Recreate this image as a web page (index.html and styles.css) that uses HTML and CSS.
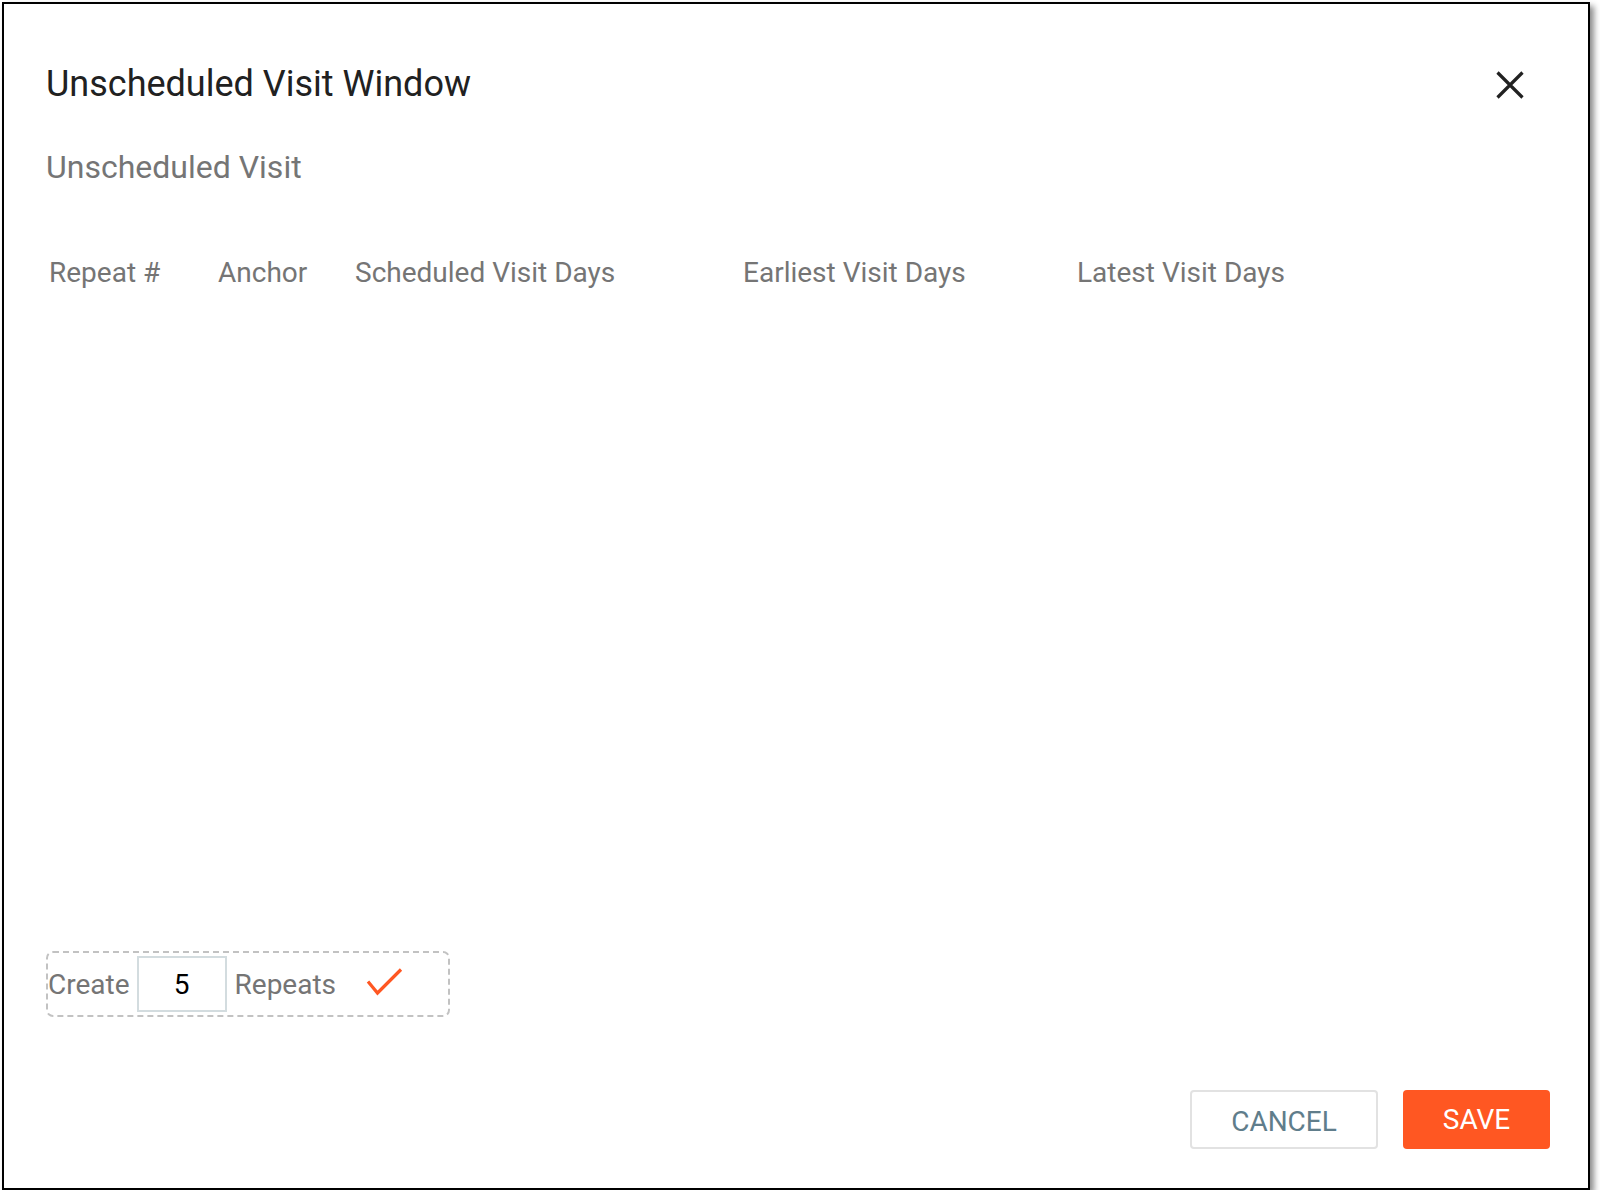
FILE: index.html
```html
<!DOCTYPE html>
<html lang="en">
<head>
<meta charset="utf-8">
<title>Unscheduled Visit Window</title>
<link rel="stylesheet" href="styles.css">
</head>
<body>
<div class="dialog">
  <div class="dialog-head">
    <h1 class="title">Unscheduled Visit Window</h1>
    <button class="close" aria-label="Close">
      <svg width="28" height="28" viewBox="0 0 28 28"><path d="M1.5 1.5 L26.5 26.5 M26.5 1.5 L1.5 26.5" stroke="#212121" stroke-width="3.2" fill="none"/></svg>
    </button>
  </div>
  <h2 class="subtitle">Unscheduled Visit</h2>
  <div class="cols">
    <span>Repeat #</span>
    <span>Anchor</span>
    <span>Scheduled Visit Days</span>
    <span>Earliest Visit Days</span>
    <span>Latest Visit Days</span>
  </div>
  <div class="spacer"></div>
  <div class="create">
    <span class="lbl">Create</span>
    <input class="num" type="text" value="5">
    <span class="lbl rep">Repeats</span>
    <svg class="check" width="38" height="32" viewBox="0 0 38 32"><path d="M2 15.5 L11.5 27 L35 3.5" stroke="#ff5722" stroke-width="3.2" fill="none"/></svg>
  </div>
  <div class="footer">
    <button class="btn cancel">CANCEL</button>
    <button class="btn save">SAVE</button>
  </div>
</div>
</body>
</html>
```
FILE: styles.css
```css
html, body {
  margin: 0;
  padding: 0;
  background: #ffffff;
}
body {
  font-family: Roboto, "Liberation Sans", sans-serif;
}
.dialog {
  box-sizing: border-box;
  margin: 2px 0 0 2px;
  width: 1588px;
  height: 1188px;
  border: 2px solid #000;
  background: #fff;
  box-shadow: 4px 4px 6px rgba(0, 0, 0, 0.45);
  display: flex;
  flex-direction: column;
  padding: 58px 38px 39px 42px;
}
.dialog-head {
  display: flex;
  align-items: center;
  justify-content: space-between;
}
.title {
  margin: 0;
  font-size: 36px;
  line-height: 44px;
  font-weight: 400;
  color: #212121;
}
.close {
  border: 0;
  background: transparent;
  padding: 0;
  margin: 2px 26px 0 0;
  width: 28px;
  height: 28px;
  display: flex;
}
.subtitle {
  margin: 41px 0 0 0;
  font-size: 32px;
  line-height: 40px;
  font-weight: 400;
  color: #757575;
}
.cols {
  margin: 68px 0 0 3px;
  display: grid;
  grid-template-columns: 169px 137px 388px 334px 1fr;
  font-size: 28px;
  line-height: 36px;
  color: #757575;
}
.spacer {
  flex: 1;
}
.create {
  box-sizing: border-box;
  margin-left: 0;
  width: 404px;
  height: 66px;
  border: 2px dashed #c2c2c2;
  border-radius: 7px;
  display: flex;
  align-items: center;
  padding-top: 2px;
}
.lbl {
  font-size: 28px;
  line-height: 36px;
  color: #757575;
}
.num {
  box-sizing: border-box;
  width: 90px;
  height: 56px;
  margin: -2px 8px 0 7px;
  border: 2px solid #d3dcdf;
  border-radius: 0;
  outline: none;
  text-align: center;
  font-family: Roboto, "Liberation Sans", sans-serif;
  font-size: 28px;
  color: #000;
  padding: 0;
}
.check {
  margin: -6px 0 0 30px;
}
.footer {
  margin-top: 73px;
  display: flex;
  justify-content: flex-end;
  gap: 25px;
}
.btn {
  box-sizing: border-box;
  font-family: Roboto, "Liberation Sans", sans-serif;
  font-size: 28px;
  border-radius: 4px;
  cursor: pointer;
}
.cancel {
  width: 188px;
  height: 59px;
  background: #fff;
  border: 2px solid #e2e2e2;
  color: #607d8b;
  padding: 4px 0 0 0;
}
.save {
  width: 147px;
  height: 59px;
  background: #ff5722;
  border: 0;
  color: #fff;
  padding: 0;
}
```
